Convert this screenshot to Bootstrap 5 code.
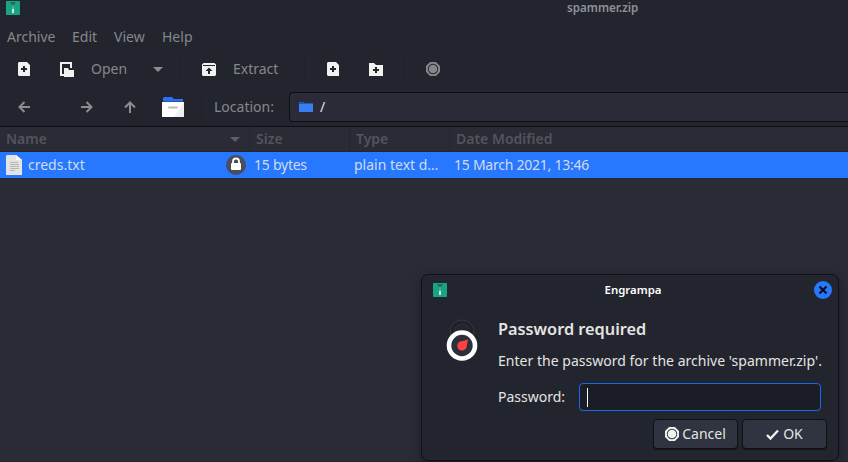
<!DOCTYPE html>
<html lang="en">
<head>
<meta charset="utf-8">
<meta name="viewport" content="width=device-width, initial-scale=1">
<title>spammer.zip</title>
<link href="https://cdn.jsdelivr.net/npm/bootstrap@5.3.0/dist/css/bootstrap.min.css" rel="stylesheet">
<style>
body{font-family:"Noto Sans",sans-serif;font-size:14px;line-height:20px;background:#23252e;color:#85878b;width:848px;height:462px;overflow:hidden;white-space:nowrap}
svg{display:block;flex:none}
.titlebar{height:22px;padding-left:6px}
.title-text{font-size:11.6px;font-weight:600;line-height:16px;margin-left:547px;color:#909297}
.menus{height:28px;padding:5px 0 0 7px;border-bottom:1px solid #20222a}
.menus .nav-link{padding:0;color:inherit;line-height:20px}
.tools{height:38px}
.tools2{height:39px;padding-top:1px;padding-bottom:1px;border-bottom:1px solid #0d0e12}
.cell{flex:none;display:flex;align-items:center}
.vline{width:1px;height:30px;background:#20222a;flex:none}
.entry{height:30px;background:#2a2b36;border:1px solid #0d0e12;border-right:0;border-radius:4px 0 0 4px;padding-left:9px;color:#e4e4e6}
.heads{height:24px;background:#2a2b35;color:#51545c;font-weight:600}
.heads>div{border-right:1px solid #24262f;height:100%;padding-left:6px;display:flex;align-items:center}
.heads>div:last-child{border:0}
.file{height:27px;background:#2777ff;color:#d0dcf0;border-top:1px solid #24262f}
.digits{letter-spacing:-.25px}
.c-name{width:250px}.c-size,.c-type{width:100px}
.pane{height:283px;background:#292b36}
.dlg{position:absolute;left:421px;top:274px;width:418px;height:187px;background:#23252e;border:1px solid #101117;border-radius:7px;box-shadow:0 3px 12px rgba(0,0,0,.35);color:#e4e4e3}
.dlg-head{height:30px;padding:0 6px 0 11px}
.dlg-title{font-size:11.4px;font-weight:600;color:#fff;padding-left:5px}
.dlg-body{padding:12px 0 0 24px}
.msg{margin-left:20px;width:323px}
.msg h1{font-size:16.3px;font-weight:600;line-height:24px;margin:0}
.pw{width:242px;height:28px;background:#1b1d26;border:1px solid #1968ec;border-radius:4px;padding:4px 7px}
.caret{width:1px;height:19px;background:#fff}
.btn-dark2{height:30px;width:85px;padding:0;background:#303340;border:1px solid #101117;border-radius:4px;color:#e4e4e3;font-size:14px;line-height:20px;box-shadow:0 1px 1px #14151b}
</style>
</head>
<body>
<svg width="0" height="0" class="position-absolute"><defs>
<g id="zip"><rect width="14" height="14" rx="1" fill="#1aa383"/><path d="M4 1h6L8 4v2H6V4z" fill="#12745f"/><path d="M6.500 4h1v4h-1z" fill="#7cc9b4"/><path d="M6 8h2v4H6z" fill="#c4ecdf"/></g>
<g id="stop"><path fill-rule="evenodd" d="M4.1 0h5.8L14 4.1v5.8L9.9 14H4.1L0 9.900V4.100zM7 1.800a5.200 5.200 0 1 0 0 10.400A5.200 5.200 0 1 0 7 1.800z"/><circle cx="7" cy="7" r="4.300"/></g>
</defs></svg>

<header class="titlebar d-flex align-items-start">
  <svg width="14" height="15" viewBox="0 -1 14 15"><use href="#zip"/></svg>
  <div class="title-text">spammer.zip</div>
</header>
<nav class="menus d-flex">
  <a class="nav-link" style="width:65px">Archive</a><a class="nav-link" style="width:42px">Edit</a><a class="nav-link" style="width:48px">View</a><a class="nav-link">Help</a>
</nav>

<div class="tools d-flex align-items-center">
  <div class="cell" style="width:60px;padding-left:18px"><svg width="12" height="14"><path fill="#f1f1ef" fill-rule="evenodd" d="M1 0h8l3 3v11H1l-1-1V1zM5 4v2H3v2h2v2h2V8h2V6H7V4z"/></svg></div>
  <div class="cell" style="width:31px"><svg width="15" height="15"><path fill="none" stroke="#f1f1ef" stroke-width="2" d="M11 6V1H1v12h3"/><path fill="#f1f1ef" d="M4 6h4l1 2h5v7H4z"/></svg></div>
  <div class="cell" style="width:62px">Open</div>
  <div class="cell" style="width:27px"><svg width="10" height="5"><path fill="#8c8d90" d="M0 0h10L5 5z"/></svg></div>
  <div class="vline"></div>
  <div class="cell" style="width:52px;padding-left:21px"><svg width="14" height="13"><path fill="#f1f1ef" fill-rule="evenodd" d="M1.500 0h11L14 1.500V12l-1 1H1l-1-1V1.500zM1 2v1h12V2zM7 4.500L3.500 8H6v3h2V8h2.500z"/></svg></div>
  <div class="cell" style="width:71px">Extract</div>
  <div class="vline"></div>
  <div class="cell" style="width:64px;padding-left:22px"><svg width="12" height="14"><path fill="#f1f1ef" fill-rule="evenodd" d="M1 0h8l3 3v11H1l-1-1V1zM5 4v2H3v2h2v2h2V8h2V6H7V4z"/></svg></div>
  <div class="cell" style="width:35px"><svg width="14" height="13"><path fill="#f1f1ef" fill-rule="evenodd" d="M0 0h5l2 2h7v11H0zM6 4v2H4v2h2v2h2V8h2V6H8V4z"/></svg></div>
  <div class="vline"></div>
  <div class="cell" style="padding-left:21px"><svg width="14" height="14" fill="#858689"><use href="#stop"/></svg></div>
</div>

<div class="tools2 d-flex align-items-center">
  <div class="cell" style="width:81px;padding-left:18px"><svg width="12" height="12" fill="none" stroke="#8c8d90" stroke-width="2"><path d="M12 6H2M6.500 1L1.500 6l5 5"/></svg></div>
  <div class="cell" style="width:43px"><svg width="12" height="12" fill="none" stroke="#8c8d90" stroke-width="2"><path d="M0 6h10M5.500 1l5 5-5 5"/></svg></div>
  <div class="cell" style="width:38px"><svg width="12" height="12" fill="none" stroke="#8c8d90" stroke-width="2"><path d="M6 12V2M1 6.500l5-5 5 5"/></svg></div>
  <div class="cell" style="width:39px"><svg width="22" height="20"><path fill="#2d70ed" d="M1 1l1-1h8l2 2h9v5H1z"/><path fill="#1c56c4" d="M1 4h20v1H1z"/><path fill="#fff" d="M0 5h22v15H0z"/><path fill="#efefef" d="M22 5v15H12z"/><path stroke="#bcbcbc" stroke-width="2" stroke-linecap="round" d="M7 10.500h8"/></svg></div>
  <div class="vline"></div>
  <div class="cell" style="width:87px;padding-left:12px">Location:</div>
  <div class="entry flex-grow-1 d-flex align-items-center"><svg width="14" height="10"><path fill="#2458b5" d="M0 0h5l1 1h8v3H0z"/><path fill="#3a7df0" d="M0 2h14v8H0z"/></svg><span style="margin-left:7px">/</span></div>
</div>

<div class="heads d-flex">
  <div class="c-name justify-content-between" style="padding-right:9px"><span>Name</span><svg width="10" height="5"><path fill="#5c5f68" d="M0 0h10L5 5z"/></svg></div>
  <div class="c-size">Size</div><div class="c-type">Type</div><div>Date Modified</div>
</div>
<div class="file d-flex align-items-center">
  <div class="c-name d-flex align-items-center" style="padding-left:6px">
    <svg width="16" height="20"><path fill="#e4e4e2" d="M0 1l1-1h9l6 5v15H0z"/><path fill="#fff" d="M10 0l6 5h-6z"/><path stroke="#b4b5b4" d="M4 7.500h8M4 9.500h9M4 11.500h9M4 13.500h9M4 15.500h5"/></svg>
    <span style="margin-left:6px">creds.txt</span>
    <svg class="ms-auto" style="margin-right:4px" width="20" height="20"><circle cx="10" cy="10" r="10" fill="#494d5c"/><path fill="none" stroke="#fff" stroke-width="1.800" d="M7 9V6.500a3 3 0 0 1 6 0V9"/><rect x="5" y="8" width="10" height="7" rx="1" fill="#fff"/></svg>
  </div>
  <div class="c-size ps-1 digits">15 bytes</div><div class="c-type ps-1">plain text d…</div><div class="ps-1 digits">15 March 2021, 13:46</div>
</div>
<main class="pane"></main>

<section class="dlg">
  <div class="dlg-head d-flex align-items-center justify-content-between">
    <svg width="14" height="14"><use href="#zip"/></svg>
    <div class="dlg-title">Engrampa</div>
    <svg width="18" height="18"><circle cx="9" cy="9" r="9" fill="#2777ff"/><path stroke="#0b1020" stroke-width="2.200" d="M5.500 5.500l7 7M12.500 5.500l-7 7"/></svg>
  </div>
  <div class="dlg-body d-flex">
    <svg width="32" height="44" style="margin-top:1px"><path fill="none" stroke="#353742" d="M4.500 17V13a11.500 11 0 0 1 23 0v4"/><path fill="none" stroke="#1e2028" stroke-width="3" d="M6.500 16v-2a9.500 9.500 0 0 1 19 0v2"/><path fill="none" stroke="#30323d" d="M8.500 14a7.500 8 0 0 1 15 0"/><circle cx="16" cy="27.500" r="13" fill="#2c303c" stroke="#fff" stroke-width="4.600"/><path fill="#ff4141" d="M22 21.500c-.5 3-1 4.500-1.200 6.500a4.800 4.800 0 1 1-5-5c2 0 3.700-.7 6.200-1.500z"/></svg>
    <div class="msg">
      <h1>Password required</h1>
      <div style="margin-top:10px;letter-spacing:.02px">Enter the password for the archive 'spammer.zip'.</div>
      <div class="d-flex align-items-center justify-content-between" style="margin-top:12px"><span>Password:</span><div class="pw"><div class="caret"></div></div></div>
    </div>
  </div>
  <div class="d-flex justify-content-end" style="gap:4px;margin:8px 11px 0 0">
    <button class="btn btn-dark2 d-flex align-items-center justify-content-center"><svg style="margin-right:3px" width="14" height="14" fill="#f1f1ef"><use href="#stop"/></svg>Cancel</button>
    <button class="btn btn-dark2 d-flex align-items-center justify-content-center"><svg class="me-1" width="13" height="11"><path fill="none" stroke="#f1f1ef" stroke-width="2.400" d="M1 6l3.500 3.500L12 1.500"/></svg>OK</button>
  </div>
</section>
<script src="https://cdn.jsdelivr.net/npm/bootstrap@5.3.0/dist/js/bootstrap.bundle.min.js"></script>
</body>
</html>
